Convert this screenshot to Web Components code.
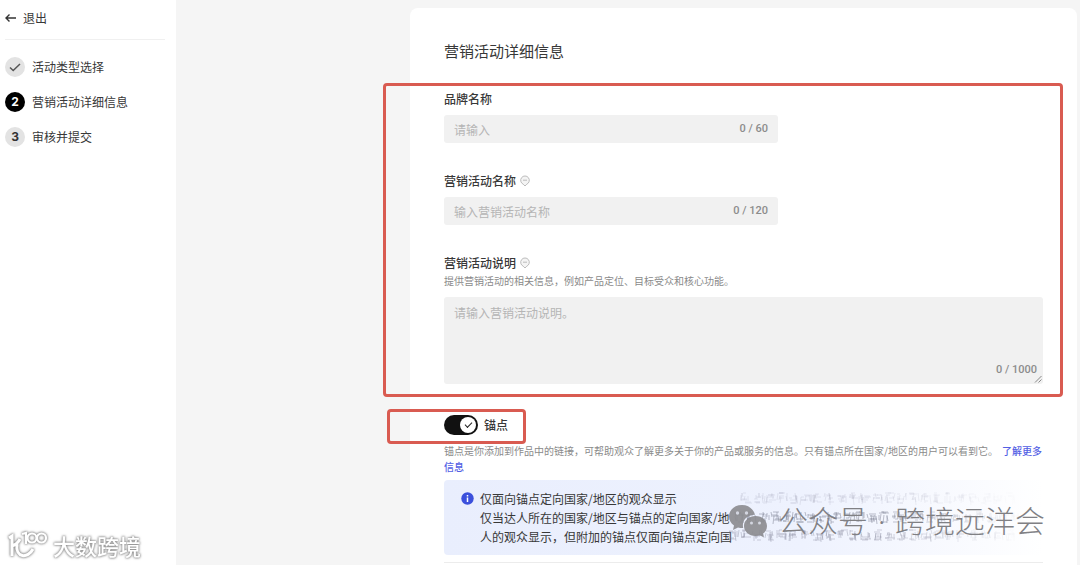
<!DOCTYPE html>
<html lang="zh-CN">
<head>
<meta charset="utf-8">
<title>营销活动详细信息</title>
<style>
  body {
    margin: 0;
    font-family: "Noto Sans CJK SC", sans-serif;
    font-size: 12px;
    line-height: 16px;
    color: #383838;
    background: #f5f5f5;
  }
</style>
</head>
<body>
<campaign-page></campaign-page>

<script>
function define(name, html, setup) {
  const template = document.createElement('template');
  template.innerHTML = html;
  customElements.define(name, class extends HTMLElement {
    constructor() {
      super();
      this.attachShadow({ mode: 'open' });
    }
    connectedCallback() {
      if (this.shadowRoot.firstChild) return;
      this.shadowRoot.appendChild(template.content.cloneNode(true));
      if (setup) setup(this, this.shadowRoot);
    }
  });
}

// one line of the side navigation
define('step-item', `
  <style>
    :host { display: flex; align-items: center; gap: 7px; }
    .dot {
      display: flex; align-items: center; justify-content: center;
      width: 20px; height: 20px; border-radius: 50%;
      background: #e3e3e3; color: #333;
      font: 700 12px/20px Inter, sans-serif;
    }
    :host([current]) .dot { background: #000; color: #fff; }
    svg { width: 12px; height: 12px; fill: none; stroke: #555; stroke-width: 1.5; }
  </style>
  <span class="dot"></span>
  <slot></slot>
`, (el, root) => {
  root.querySelector('.dot').innerHTML = el.hasAttribute('done')
    ? '<svg viewBox="0 0 12 12"><path d="M1 6.5l3.2 3L11 3"/></svg>'
    : el.getAttribute('number');
});

define('side-nav', `
  <style>
    :host { display: block; flex: none; width: 176px; box-sizing: border-box; padding: 8px 11px 0 5px; background: #fff; }
    a { display: flex; align-items: center; gap: 6px; height: 20px; padding-bottom: 11px; border-bottom: 1px solid #f0f0f0; color: inherit; text-decoration: none; }
    svg { width: 12px; height: 12px; fill: none; stroke: #333; stroke-width: 1.4; }
    nav { display: flex; flex-direction: column; gap: 15px; padding-top: 17px; }
  </style>
  <a href="#"><svg viewBox="0 0 12 12"><path d="M4.500 2.500L1 6L4.500 9.500M1 6H11"/></svg>退出</a>
  <nav><slot></slot></nav>
`);

// red outline drawn round whatever is slotted in
define('mark-box', `
  <style>
    :host { display: block; position: relative; }
    .line {
      position: absolute; inset: var(--mark-inset);
      border: 3px solid #d95b51; border-radius: 4px;
      pointer-events: none;
    }
  </style>
  <slot></slot>
  <div class="line"></div>
`);

define('form-field', `
  <style>
    :host { display: block; }
    .label { display: flex; align-items: center; gap: 4px; font-weight: 500; }
    .tip { display: none; width: 10px; height: 12px; fill: #f4f4f4; stroke: #bbb; }
    :host([tip]) .tip { display: block; }
    .hint { margin: 2px 0 0; font-size: 10px; color: #8a8a8a; }
    .hint:empty { display: none; }
    .box { position: relative; display: flex; margin-top: 8px; max-width: 334px; background: #f1f1f1; border-radius: 3px; }
    :host([multiline]) .box { max-width: none; }
    input, textarea {
      flex: 1; min-width: 0; box-sizing: border-box; margin: 0; padding: 0 10px;
      border: 0; outline: 0; background: none; color: inherit;
      font: inherit; resize: none;
    }
    input { height: 28px; }
    textarea { height: 87px; padding-top: 8px; }
    ::placeholder { color: #b5b5b5; opacity: 1; }
    .count { align-self: center; padding-right: 10px; font: 500 11px/16px Roboto, sans-serif; color: #8c8c8c; }
    :host([multiline]) .count { position: absolute; right: 6px; bottom: 6px; padding: 0; }
    .grip { display: none; position: absolute; right: 1px; bottom: 1px; width: 8px; height: 8px; stroke: #888; }
    :host([multiline]) .grip { display: block; }
  </style>
  <div class="label"><label for="control"></label>
    <svg class="tip" viewBox="0 0 10 12"><path d="M5 11L3.200 9.200A4.300 4.300 0 1 1 6.800 9.200ZM3 5.200H7"/></svg>
  </div>
  <p class="hint"></p>
  <div class="box">
    <span class="count"></span>
    <svg class="grip" viewBox="0 0 8 8"><path d="M1 7.500L7.500 1M4.500 7.500L7.500 4.500"/></svg>
  </div>
`, (el, root) => {
  const max = el.getAttribute('max');
  const count = root.querySelector('.count');
  const control = document.createElement(el.hasAttribute('multiline') ? 'textarea' : 'input');
  control.id = 'control';
  control.maxLength = max;
  control.placeholder = el.getAttribute('placeholder');
  root.querySelector('label').textContent = el.getAttribute('label');
  root.querySelector('.hint').textContent = el.getAttribute('hint') || '';
  root.querySelector('.box').prepend(control);
  const update = () => count.textContent = control.value.length + ' / ' + max;
  control.oninput = update;
  update();
});

define('toggle-switch', `
  <style>
    :host { display: block; }
    label { display: flex; align-items: center; gap: 6px; height: 20px; font-weight: 500; }
    input {
      appearance: none; position: relative; width: 34px; height: 20px; margin: 0;
      border-radius: 10px; background: #aaa;
    }
    input:checked { background: #111; }
    input::before { content: ""; position: absolute; left: 2px; top: 2px; width: 16px; height: 16px; border-radius: 50%; background: #fff; }
    input:checked::before { left: 16px; }
    input:checked::after {
      content: ""; position: absolute; left: 21px; top: 7px; width: 6px; height: 3px;
      border: solid #222; border-width: 0 0 1px 1px; transform: rotate(-45deg);
    }
  </style>
  <label><input type="checkbox" role="switch" checked><slot></slot></label>
`);

// blue note whose right side fades out under worn print
define('info-note', `
  <style>
    :host {
      display: flex; position: relative; gap: 6px; padding: 9px 17px; border-radius: 4px;
      line-height: 19px; white-space: nowrap;
      background: linear-gradient(90deg, #e9eefd 0, #eef2fe 60%, #fff 100%);
    }
    .icon { flex: none; width: 13px; height: 13px; margin-top: 3px; }
    .worn {
      position: absolute; right: 16px; top: 10px; width: 300px; height: 55px;
      fill: none; stroke: #7d8194;
      mask-image: linear-gradient(90deg, #000 50%, transparent);
    }
  </style>
  <svg class="icon" viewBox="0 0 13 13"><circle cx="6.500" cy="6.500" r="6.200" fill="#3b50dc"/><path d="M6.500 5.500V10M6.500 3V4.400" stroke="#fff" stroke-width="1.500"/></svg>
  <div><slot></slot></div>
  <svg class="worn" viewBox="0 0 300 55"></svg>
`, (el, root) => {
  let seed = 7;
  const rnd = n => (seed = (seed * 16807) % 2147483647) % n;
  // [x start, top, opacity] of each row of broken characters
  const rows = [[14, 3, 0.15], [8, 22, 0.5], [2, 40, 0.35]];
  root.querySelector('.worn').innerHTML = rows.map(([start, top, opacity]) => {
    let d = '';
    for (let x = start; x < 290; x += 12) {
      for (let i = 0; i < 5; i++) {
        d += `M${x + rnd(11)} ${top + rnd(5)}l${rnd(3) - 1} ${4 + rnd(5)}`;
        d += `M${x + rnd(5)} ${top + rnd(11)}h${3 + rnd(5)}`;
      }
    }
    return `<path d="${d}" opacity="${opacity}"/>`;
  }).join('');
});

define('account-mark', `
  <style>
    :host { display: flex; align-items: center; gap: 10px; color: #808084; font-family: "Noto Sans", "Noto Sans CJK SC", sans-serif; font-size: 30px; font-weight: 300; line-height: 40px; white-space: nowrap; }
    svg { width: 40px; height: 34px; }
  </style>
  <svg viewBox="0 0 40 34"><g opacity=".9"><path fill="#8b8b8f" d="M14 1C6.500 1 1 6 1 12.500c0 3.700 1.900 6.800 5 9L5 26l5-2.600c1.800.5 3.500.7 5.200.6C13.500 16.500 19 10.700 27 10.700C25.500 5 20.400 1 14 1Z"/><path fill="#8b8b8f" d="M27.500 12C20.800 12 16 16.500 16 22s4.800 10 11.500 10c1.500 0 3-.2 4.300-.7L36 33.500l-1-3.700c2.500-1.900 4-4.500 4-7.800C39 16.500 34.200 12 27.500 12Z"/></g><g fill="#d3d6e0"><circle cx="9.500" cy="9" r="1.700"/><circle cx="18.500" cy="9" r="1.700"/><circle cx="23.500" cy="19" r="1.500"/><circle cx="31.500" cy="19" r="1.500"/></g></svg>
  <span><slot></slot></span>
`);

define('site-mark', `
  <style>
    :host { display: flex; align-items: center; gap: 5px; color: #fff; font-size: 22px; font-weight: 500; line-height: 28px; filter: drop-shadow(0 0 1px #888) drop-shadow(0 0 1px #aaa); }
    svg { width: 40px; height: 28px; fill: none; stroke: #fff; stroke-width: 3; }
  </style>
  <svg viewBox="0 0 40 28"><path d="M1 7L4 5V25M4 15C7 14 10 12 12 8M9 13C7 27 20 28 25 18"/><path stroke-width="2.200" d="M14 3L18 2V13"/><g stroke-width="2.200"><circle cx="24" cy="7" r="4.500"/><circle cx="33.500" cy="7" r="4.500"/></g></svg>
  <slot></slot>
`);

define('campaign-page', `
  <style>
    :host { display: flex; min-height: 100vh; }
    main { flex: 1; min-width: 0; display: flex; padding: 8px 3px 0 234px; }
    section { flex: 1; min-width: 0; padding: 33px 34px 0; background: #fff; border-radius: 8px 8px 0 0; }
    h1 { margin: 0 0 30px; font-size: 15px; line-height: 20px; font-weight: 400; }
    .fields { --mark-inset: -8px -20px -13px -61px; }
    .fields > form-field + form-field { margin-top: 30px; }
    .anchor { --mark-inset: -6px -18px -9px -57px; width: fit-content; margin-top: 31px; }
    p { margin: 8px 0 5px; font-size: 10px; line-height: 16px; color: #8a8a8a; }
    p a { margin-left: 4px; color: #5360e4; text-decoration: none; font-weight: 500; }
    hr { margin: 7px 0 0; border: 0; border-top: 1px solid #ececec; }
    .note { position: relative; }
    account-mark { position: absolute; right: -2px; top: 21px; }
    account-mark span { margin: 0 2px; }
    site-mark { position: fixed; left: 8px; bottom: 6px; }
  </style>
  <side-nav>
    <step-item done>活动类型选择</step-item>
    <step-item number="2" current>营销活动详细信息</step-item>
    <step-item number="3">审核并提交</step-item>
  </side-nav>
  <main>
    <section>
      <h1>营销活动详细信息</h1>
      <mark-box class="fields">
        <form-field label="品牌名称" placeholder="请输入" max="60"></form-field>
        <form-field label="营销活动名称" tip placeholder="输入营销活动名称" max="120"></form-field>
        <form-field label="营销活动说明" tip multiline hint="提供营销活动的相关信息，例如产品定位、目标受众和核心功能。" placeholder="请输入营销活动说明。" max="1000"></form-field>
      </mark-box>
      <mark-box class="anchor"><toggle-switch>锚点</toggle-switch></mark-box>
      <p>锚点是你添加到作品中的链接，可帮助观众了解更多关于你的产品或服务的信息。只有锚点所在国家/地区的用户可以看到它。<a href="#">了解更多信息</a></p>
      <div class="note">
        <info-note>仅面向锚点定向国家/地区的观众显示<br>仅当达人所在的国家/地区与锚点的定向国家/地<br>人的观众显示，但附加的锚点仅面向锚点定向国</info-note>
        <account-mark>公众号<span> · </span>跨境远洋会</account-mark>
      </div>
      <hr>
    </section>
  </main>
  <site-mark>大数跨境</site-mark>
`);
</script>
</body>
</html>
